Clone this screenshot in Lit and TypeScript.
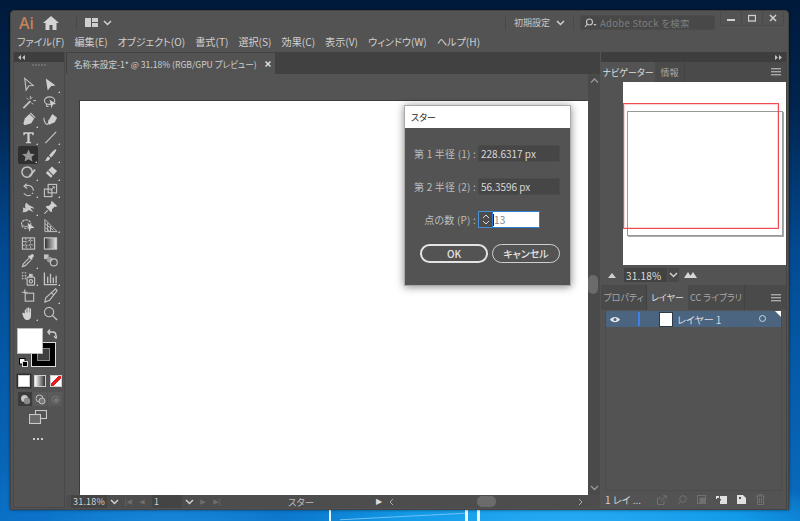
import { LitElement, html, css, svg } from "lit";
import { customElement } from "lit/decorators.js";

const S = (c: any, size = 16) => html`<svg class="ic" width=${size} height=${size} viewBox="0 0 16 16" fill="none" stroke="#c4c4c4" stroke-width="1.2">${c}</svg>`;

const tools: [any, boolean][] = [
  [svg`<path d="M4 1.5 13 9 8.5 9.3 5.5 14Z"/>`, false],
  [svg`<path d="M3 1.5 13.5 9 8.8 9.5 5 14.5Z" fill="#cfcfcf" stroke="none"/>`, true],
  [svg`<path d="M2.5 14 10 6.5" stroke-width="2"/><path d="M10 1v3M12 2.5l-2 2M13 6h3M6 3l2 2M11 8l2 2" stroke-width="1"/>`, false],
  [svg`<ellipse cx="7" cy="6" rx="5.5" ry="4"/><path d="M4 9c-1 2 0 4 2 3" /><path d="M7 5 14 9.5 10.5 10 9 14Z" fill="#cfcfcf" stroke="none"/>`, false],
  [svg`<path d="M9 2 14 7 11 12 4 14 2.5 12.5 4 7Z" fill="#cfcfcf" stroke="none"/><path d="M10 1 15 6" stroke-width="1.4"/>`, true],
  [svg`<path d="M1 6c0 4 2 8 4 7s0-4 2-5" /><path d="M10 2 15 6 12.5 11 6.5 13.5 5.5 12 7.5 6Z" fill="#cfcfcf" stroke="none"/>`, false],
  [svg`<path d="M2.5 2.5h11v3h-1.2l-.6-1.4H9.2V12.5l1.6.5v1H5.2v-1l1.6-.5V4.1H4.3l-.6 1.4H2.5Z" fill="#d0d0d0" stroke="none"/>`, true],
  [svg`<path d="M2.5 14 14 2" stroke-width="1.3"/>`, true],
  [svg`<path d="M8 1.5 10 6l4.8.5-3.6 3.2 1 4.8L8 12l-4.2 2.5 1-4.8L1.2 6.5 6 6Z" fill="#959595" stroke="none"/>`, true],
  [svg`<path d="M14 1.5c.8.6-2.5 6-5.5 8.5L6.5 8C9 5 13 .9 14 1.5Z" fill="#cfcfcf" stroke="none"/><path d="M5.5 9c-2 .5-1.500 3-3.500 5 3 0 5.500-.8 5.500-3.500Z" fill="#cfcfcf" stroke="none"/>`, true],
  [svg`<circle cx="6.500" cy="7.500" r="5.500" stroke-width="1.600"/><path d="M9 12 15 5" stroke-width="2"/>`, true],
  [svg`<path d="M9.500 1.500 15 6.500 8.500 13.500 3 8.500Z" fill="#d0d0d0" stroke="none"/><path d="M5.500 6 11 11.500" stroke="#535353"/>`, true],
  [svg`<path d="M4.500 3.500A5.500 5.500 0 1 1 3 11" stroke-dasharray="12 2 1.500 1.500"/><path d="M6 .8 3.200 3.500 6.500 5.800" />`, true],
  [svg`<rect x="1.500" y="6.500" width="8" height="8"/><rect x="5.500" y="1.500" width="9" height="9"/><path d="M8 8l4-4M10 4h2v2" stroke-width="1"/>`, true],
  [svg`<path d="M1.500 13c1-1 1-3 .5-5 1.500 0 2 1 3 1-1-2-1-5 1-6 1 1 2 3 4 3 1 1 3 1 4.500 3-2 0-3-.5-4-.5 0 2 2 3 3 4-2 0-4-1-5-2-1 2-4 3-7.500 2.500Z" fill="#c8c8c8" stroke="none"/>`, true],
  [svg`<path d="M9.500 1 15 6.500 13.800 7.500 12.500 7 9.500 10l.3 2-1.300 1L3 7.500l1-1.300 2 .3L9 3.500 8.500 2.200Z" fill="#d0d0d0" stroke="none"/><path d="M5 11 1.500 14.500"/>`, false],
  [svg`<ellipse cx="5.500" cy="6.500" rx="5" ry="4.500" stroke-dasharray="2.500 1"/><path d="M1 7c2 2 5 3 7 1" stroke-width="1"/><path d="M7 5 14.500 10.500 10.500 11 9 15Z" fill="#d0d0d0" stroke="none"/>`, false],
  [svg`<path d="M2 1.500v13h13ZM2 6l9 7M2 10l5 4M5 5v9M8 8.500V14" stroke-width="1"/>`, true],
  [svg`<rect x="1.500" y="2" width="13" height="12"/><path d="M2 6c3-1 4 1 5 0s3-2 7-1M2 10c3-1 4 1 6 0s3-1 6 0M5 2c1 3-1 4 0 6s0 4 1 6M10 2c-1 3 1 4 0 6s1 4 0 6" stroke-width="1" stroke-dasharray="2 1"/>`, false],
  [svg`<rect x="1.500" y="2" width="13" height="12" fill="url(#gr)" stroke="#c8c8c8"/>`, false],
  [svg`<path d="M13 1.500c1.500 1.500.5 3-1 3.500l.5 1.500-1.500 1L7.500 4l1-1.500 1.500.5c.5-1.500 2-2.500 3-1.500Z" fill="#d0d0d0" stroke="none"/><path d="M8.500 5.500 2.500 11.500l-1 3 3-1 6-6" />`, true],
  [svg`<rect x="1" y="1.500" width="5" height="5" fill="#c0c0c0" stroke="none"/><circle cx="7" cy="7" r="3" fill="#999" stroke="none"/><circle cx="11.500" cy="10" r="3.700"/>`, false],
  [svg`<rect x="6.500" y="6.500" width="8" height="8.500" rx="1"/><circle cx="10.500" cy="11" r="1.800"/><rect x="8.500" y="3" width="4" height="3.500" fill="#c0c0c0" stroke="none"/><path d="M1 2h1.500M4 2h1.500M1 5h1.500M4 5h1.500M1 8h1.500M4 8h1.500" stroke-width="1.500"/>`, true],
  [svg`<path d="M1.500 1.500V14.500H15M5 13V6M8 13V3M11 13V7M14 13V5" stroke-width="1.400"/>`, true],
  [svg`<rect x="4.500" y="5.500" width="9" height="8.500"/><path d="M1 4.500h6M4 1.500v4" />`, false],
  [svg`<path d="M13.500 1 15 3 7 13 2 15l1-4.500Z"/><path d="M9 5l2.500 2.500" />`, true],
  [svg`<path d="M4 8V4.500c0-1 1.300-1 1.300 0V7h.4V2.500c0-1 1.400-1 1.400 0V7h.4V2c0-1 1.400-1 1.400 0v5h.4V3.200c0-1 1.400-1 1.400 0V10c0 3-1.500 5-4 5-2 0-3-1-4-3L1.500 8.500c-.6-1 .7-1.800 1.400-1Z" fill="#d4d4d4" stroke="none"/>`, true],
  [svg`<circle cx="6.500" cy="6.500" r="5"/><path d="M10 10l5 5" stroke-width="1.500"/>`, false],
];

const chev = html`<svg class="ic" width="9" height="6" viewBox="0 0 9 6" fill="none" stroke="#d0d0d0" stroke-width="1.500"><path d="M1 1l3.500 3.500L8 1"/></svg>`;
const menuIc = html`<svg class="ic" width="10" height="8" viewBox="0 0 10 8" fill="#a8a8a8"><rect width="10" height="1.400"/><rect y="3" width="10" height="1.400"/><rect y="6" width="10" height="1.400"/></svg>`;
const corner = (left: boolean) => html`<svg class="ic" width="7" height="5" viewBox="0 0 7 5" fill="#c0c0c0"><path d=${left ? "M3 0v5L0 2.500ZM7 0v5L4 2.500Z" : "M0 0v5l3-2.500ZM4 0v5l3-2.500Z"}/></svg>`;

@customElement("app-root")
export class AppRoot extends LitElement {
  static styles = css`
    :host { display: block; width: 800px; height: 521px; overflow: hidden; position: relative;
      font-family: "Noto Sans CJK JP", "Liberation Sans", sans-serif; color: #d2d2d2;
      font-feature-settings: "palt";
      background:
        radial-gradient(300px 60px at 570px 530px, #2db0f5 0, #129ae8 60%, transparent 100%),
        radial-gradient(260px 90px at 170px 540px, #1e8fe0 0, #0a72c8 60%, transparent 100%),
        linear-gradient(180deg, #001a3c 0, #00244e 20%, #024a92 48%, #045aa8 70%, #0a6cc0 100%); }
    .ic { display: block; flex: none; }
    .beam { position: absolute; background: #eaf6ff; }
    .b1 { left: 329px; top: 510px; width: 2px; height: 11px; }
    .b2 { left: 465px; top: 510px; width: 3px; height: 11px; }
    .b3 { left: 477px; top: 510px; width: 3px; height: 11px; }
    .b4 { left: 340px; top: 516px; width: 125px; height: 1px; background: #6fc0f0; transform: rotate(-3deg); }
    .wrap { position: absolute; left: 10px; top: 10px; width: 779px; height: 500px; box-sizing: border-box;
      background: #535353; border: 1px solid #444; border-radius: 4px 4px 0 0; display: flex; flex-direction: column; box-shadow: 0 0 3px #0008; }

    .title { height: 23px; display: flex; align-items: center; flex: none; position: relative; }
    .ai { color: #c9835a; font: 500 16px "Noto Sans", sans-serif; margin-left: 8px; width: 24px; }
    .home { margin-left: 0; }
    .sep { width: 1px; height: 15px; background: #484848; flex: none; }
    .grow { flex: 1; }
    .layout { margin: 0 5px 0 8px; }
    .ws { font-size: 9px; margin-left: 8px; width: 36px; white-space: nowrap; color: #c8c8c8; }
    .search { width: 135px; height: 15px; margin-left: 6px; margin-right: 5px; background: #484848; border: 1px solid #4c4c4c; border-radius: 2px; display: flex; align-items: center; gap: 3px; padding-left: 3px; box-sizing: border-box; font-size: 9.500px; color: #7f7f7f; letter-spacing: .3px; white-space: nowrap; }
    .ctrls { display: flex; height: 14px; margin: 0 4px 0 0; border: 1px solid #4a4a4a; border-top: 0; border-radius: 0 0 2px 2px; align-self: flex-start; }
    .ctrl { width: 20px; display: flex; align-items: center; justify-content: center; border-right: 1px solid #4a4a4a; }
    .ctrl:last-child { border: 0; }

    .menu { height: 18px; flex: none; display: flex; align-items: center; padding: 0 0 3px 6px; box-sizing: border-box; gap: 10px; font-size: 10.150px; white-space: nowrap; color: #d0d0d0; }

    .main { flex: 1; display: flex; min-height: 0; padding: 0 1px 1px 2px; }

    .tb { width: 52px; flex: none; display: flex; flex-direction: column; border: 1px solid #484848; border-width: 0 1px 1px 1px; background: #535353; box-sizing: border-box; }
    .strip { height: 10px; background: #3e3e3e; flex: none; display: flex; align-items: center; padding: 0 4px; }
    .strip.r { justify-content: flex-end; padding-right: 4px; }
    .grip { width: 15px; height: 2px; margin: 2px auto 0; background: repeating-linear-gradient(90deg, #6e6e6e 0 2px, transparent 2px 3px); flex: none; }
    .tools { display: grid; grid-template-columns: 22px 22px; grid-auto-rows: 17.600px; justify-content: start; margin: 10px 0 0 3px; flex: none; }
    .tool { position: relative; display: flex; align-items: center; justify-content: center; border-radius: 2px; }
    .tool.on { background: #303030; margin: 0 1px 0 1px; }
    .tool.fly::after { content: ""; position: absolute; right: 1px; bottom: 1px; border: 1.500px solid transparent; border-right-color: #c8c8c8; border-bottom-color: #c8c8c8; }
    .colors { position: relative; height: 46px; margin-top: 6px; flex: none; }
    .fill { position: absolute; left: 3px; top: 0; width: 26px; height: 26px; background: #fff; border: 1px solid #bbb; box-sizing: border-box; z-index: 1; }
    .stroke { position: absolute; left: 17px; top: 14px; width: 25px; height: 25px; background: #000; border: 1px solid #ddd; box-sizing: border-box; display: flex; align-items: center; justify-content: center; }
    .stroke i { display: block; width: 11px; height: 11px; border: 1px solid #8a8a8a; background: #3f3f3f; }
    .swap { position: absolute; left: 33px; top: 1px; }
    .deflt { position: absolute; left: 5px; top: 30px; width: 9px; height: 9px; }
    .modes { display: flex; gap: 2px; margin: 0 0 0 3px; flex: none; height: 15px; }
    .mode { width: 12px; height: 12px; box-sizing: border-box; border: 1px solid #cfcfcf; margin: 1px; }
    .mode.w { background: #fff; box-shadow: 0 0 0 1.500px #303030; }
    .mode.g { background: linear-gradient(90deg, #fff, #333); }
    .mode.n { background: linear-gradient(135deg, #fff 38%, #e02020 38% 62%, #fff 62%); }
    .draw { display: flex; gap: 1px; margin: 3px 0 0 4px; flex: none; height: 14px; }
    .dm { width: 14px; height: 14px; display: flex; align-items: center; justify-content: center; background: #5a5a5a; }
    .dm.on { background: #3c3c3c; }
    .art { margin: 4px 0 0 15px; flex: none; }
    .dots { margin: 14px 0 0 19px; display: flex; gap: 2px; flex: none; }
    .dots i { width: 2px; height: 2px; background: #ccc; }

    .doc { width: 534px; flex: none; display: flex; flex-direction: column; margin-left: 1px; position: relative; }
    .tabs { height: 22px; background: #414141; flex: none; }
    .tab { width: 208px; height: 21px; background: #535353; margin-left: 1px; margin-top: 1px; display: flex; align-items: center; padding-left: 7px; box-sizing: border-box; font-size: 8.600px; white-space: nowrap; color: #cfcfcf; }
    .tab span { width: 191px; flex: none; }
    .canvasrow { flex: 1; display: flex; min-height: 0; }
    .canvas { flex: 1; background: #545454; padding: 27px 0 0 14px; box-sizing: border-box; display: flex; }
    .board { flex: 1; background: #fff; box-shadow: -1px -1px 0 #3c3c3c; }
    .vs { width: 12px; background: #4a4a4a; flex: none; display: flex; flex-direction: column; align-items: center; padding: 4px 0; box-sizing: border-box; }
    .thumb { width: 10px; height: 19px; border-radius: 5px; background: #6b6b6b; margin-top: 191px; margin-right: 2px; }
    .status { height: 13px; flex: none; background: #4d4d4d; display: flex; align-items: center; font-size: 9px; white-space: nowrap; }
    .field { background: #444; height: 13px; display: flex; align-items: center; padding-left: 2px; box-sizing: border-box; letter-spacing: .2px; flex: none; }
    .nav { display: flex; align-items: center; justify-content: center; width: 14px; height: 13px; flex: none; }
    .tri { color: #6e6e6e; font-size: 7px; width: 14px; text-align: center; font-family: "DejaVu Sans", sans-serif; flex: none; }
    .hthumb { width: 19px; height: 11px; background: #6b6b6b; border-radius: 5px; margin: 0 82px 0 83px; flex: none; }

    .panels { flex: 1; display: flex; flex-direction: column; margin-left: 1px; min-width: 0; border-right: 1px solid #444; }
    .ptabs { height: 20px; flex: none; background: #4a4a4a; display: flex; align-items: stretch; font-size: 9px; position: relative; }
    .pt { display: flex; align-items: center; justify-content: center; color: #a8a8a8; white-space: nowrap; box-sizing: border-box; background: #4a4a4a; border-right: 1px solid #424242; flex: none; }
    .pt.on { background: #535353; color: #dedede; border: 0; }
    .pm { margin-left: auto; display: flex; align-items: center; padding-right: 5px; }
    .navbody { height: 183px; flex: none; padding-left: 22px; display: flex; }
    .preview { flex: 1; background: #fff; position: relative; }
    .ra { position: absolute; left: 0; top: 21px; width: 156px; height: 126px; border: 1px solid #f04b50; box-shadow: inset 0 0 0 1px #f04b5040; box-sizing: border-box; }
    .rb { position: absolute; left: 4px; top: 29px; width: 156px; height: 125px; border: 1px solid #999; box-shadow: 1px 1px 0 #aaa; box-sizing: border-box; }
    .zoom { height: 20px; flex: none; display: flex; align-items: center; background: #535353; }
    .zf { width: 43px; height: 14px; background: #424242; font-size: 10px; padding-left: 2px; box-sizing: border-box; display: flex; align-items: center; color: #dcdcdc; letter-spacing: .2px; }
    .zc { width: 11px; height: 14px; background: #484848; margin-left: 1px; display: flex; align-items: center; justify-content: center; }
    .layers { flex: 1; display: flex; flex-direction: column; min-height: 0; }
    .lbody { flex: 1; margin: 1px 4px 0; background: #535353; border: 1px solid #4c4c4c; border-top: 0; }
    .lrow { height: 16px; background: #4b6480; display: flex; align-items: center; position: relative; font-size: 10px; color: #dcdcdc; white-space: nowrap; }
    .bar { width: 2px; height: 14px; background: #3f7fe8; margin-left: 1px; }
    .thumbL { width: 12px; height: 13px; background: #fff; border: 1px solid #2c3a4a; margin: 0 4px 0 19px; box-sizing: content-box; }
    .lc { width: 5px; height: 5px; border: 1px solid #cfd6de; border-radius: 50%; position: absolute; right: 15px; top: 4px; }
    .cut { position: absolute; right: 0; top: 0; border: 3px solid transparent; border-right-color: #fff; border-top-color: #fff; }
    .lfoot { height: 17px; flex: none; display: flex; align-items: center; font-size: 10px; padding-left: 4px; white-space: nowrap; }
    .lfoot > span { width: 41px; flex: none; }
    .lic { display: flex; margin-left: 11px; align-items: center; }
    .lic > * { margin-right: 10px; }

    .dlg { position: absolute; left: 338px; top: 53px; width: 167px; height: 181px; background: #535353; border: 1px solid #aaa; box-sizing: border-box; box-shadow: 0 1px 8px #0007; display: flex; flex-direction: column; }
    .dt { height: 22px; background: #fff; color: #222; font-size: 9px; display: flex; align-items: center; padding-left: 6px; flex: none; }
    .df { padding: 17px 10px 0 0; display: flex; flex-direction: column; gap: 16px; }
    .dr { display: flex; justify-content: flex-end; align-items: center; height: 17px; font-size: 10px; color: #bdbdbd; letter-spacing: .2px; white-space: nowrap; gap: 2px; }
    .input { width: 82px; height: 17px; background: #464646; border: 1px solid #4c4c4c; box-sizing: border-box; color: #d8d8d8; font-size: 10px; padding-left: 2px; display: flex; align-items: center; letter-spacing: 0; }
    .pts { display: flex; height: 17px; margin-right: 20px; }
    .spin { width: 14px; box-sizing: border-box; border: 1px solid #4a90d8; border-right: 0; display: flex; flex-direction: column; align-items: center; justify-content: center; gap: 1px; background: #4c4c4c; }
    .num { width: 48px; background: #fff; border: 1px solid #2a7fd5; box-sizing: border-box; color: #888; font-size: 10px; display: flex; align-items: center; padding-left: 0; }
    .num i { width: 1px; height: 12px; background: #222; }
    .btns { display: flex; gap: 4px; justify-content: flex-end; }
    .btn { height: 19px; width: 68px; border: 2px solid #e4e4e4; border-radius: 10px; box-sizing: border-box; display: flex; align-items: center; justify-content: center; font-size: 10px; font-weight: 500; color: #e4e4e4; }
    .btn.c { border-width: 1.500px; border-color: #cfcfcf; }
  `;

  render() {
    return html`
      <div class="beam b1"></div><div class="beam b2"></div><div class="beam b3"></div><div class="beam b4"></div>
      <div class="wrap">
        <div class="title">
          <div class="ai">Ai</div>
          <svg class="ic home" width="16" height="14" viewBox="0 0 16 14" fill="#d4d4d4"><path d="M8 0 16 7h-2.500v7H9.500V9h-3v5H2.500V7H0Z"/></svg>
          <div class="sep" style="margin-left:17px"></div>
          <svg class="ic layout" width="13" height="9" viewBox="0 0 13 9" fill="#cfcfcf"><rect width="6" height="9"/><rect x="7" width="6" height="4"/><rect x="7" y="5" width="6" height="4"/></svg>
          ${chev}
          <div class="grow"></div>
          <div class="sep"></div>
          <div class="ws">初期設定</div>
          <div style="margin-left:6px">${chev}</div>
          <div class="sep" style="margin-left:8px"></div>
          <div class="search">
            <svg class="ic" width="13" height="10" viewBox="0 0 13 10" fill="none" stroke="#c8c8c8" stroke-width="1.100"><circle cx="5.500" cy="4" r="3"/><path d="M3.300 6.200 1 9"/><path d="M9.500 6h3L11 8Z" fill="#c8c8c8" stroke="none"/></svg>
            Adobe Stock を検索
          </div>
          <div class="ctrls">
            <div class="ctrl"><svg class="ic" width="8" height="8" viewBox="0 0 8 8" fill="#d0d0d0"><rect y="5" width="8" height="2"/></svg></div>
            <div class="ctrl"><svg class="ic" width="8" height="8" viewBox="0 0 8 8" fill="none" stroke="#d0d0d0"><rect x=".5" y="1.500" width="7" height="5.500" stroke-width="1.300"/></svg></div>
            <div class="ctrl"><svg class="ic" width="8" height="8" viewBox="0 0 8 8" fill="none" stroke="#d0d0d0" stroke-width="1.500"><path d="M1 1l6 6M7 1 1 7"/></svg></div>
          </div>
        </div>
        <div class="menu">
          <span>ファイル(F)</span><span>編集(E)</span><span>オブジェクト(O)</span><span>書式(T)</span><span>選択(S)</span><span>効果(C)</span><span>表示(V)</span><span>ウィンドウ(W)</span><span>ヘルプ(H)</span>
        </div>
        <div class="main">
          <div class="tb">
            <div class="strip">${corner(true)}</div>
            <div class="grip"></div>
            <svg width="0" height="0" style="position:absolute"><defs><linearGradient id="gr"><stop offset="0" stop-color="#2a2a2a"/><stop offset="1" stop-color="#e8e8e8"/></linearGradient></defs></svg>
            <div class="tools">
              ${tools.map(([c, fly], i) => html`<div class="tool ${fly ? "fly" : ""} ${i === 8 ? "on" : ""}">${S(c, 15)}</div>`)}
            </div>
            <div class="colors">
              <div class="fill"></div>
              <div class="stroke"><i></i></div>
              <svg class="ic swap" width="10" height="10" viewBox="0 0 10 10" fill="none" stroke="#d0d0d0" stroke-width="1.300"><path d="M1 3h5c2 0 3 1 3 4"/><path d="M3 .5 .8 3 3 5.500M7 7l2 2.200L9.800 7" /></svg>
              <svg class="ic deflt" viewBox="0 0 9 9"><rect x=".5" y=".5" width="5.500" height="5.500" fill="#fff" stroke="#000"/><rect x="3.500" y="3.500" width="5" height="5" fill="#000" stroke="#ddd"/></svg>
            </div>
            <div class="modes"><div class="mode w"></div><div class="mode g"></div><div class="mode n"></div></div>
            <div class="draw">
              <div class="dm on"><svg class="ic" width="11" height="11" viewBox="0 0 11 11"><circle cx="4.500" cy="4.500" r="3.500" fill="#c8c8c8"/><circle cx="7" cy="7" r="3.200" fill="#8a8a8a"/></svg></div>
              <div class="dm"><svg class="ic" width="11" height="11" viewBox="0 0 11 11" fill="none" stroke="#c0c0c0"><circle cx="4.500" cy="4.500" r="3.500"/><circle cx="7" cy="7" r="3" fill="#777"/></svg></div>
              <div class="dm"><svg class="ic" width="9" height="9" viewBox="0 0 9 9" fill="none" stroke="#777"><circle cx="4.500" cy="4.500" r="3.500"/><circle cx="5" cy="5" r="1.500" fill="#777"/></svg></div>
            </div>
            <svg class="ic art" width="18" height="14" viewBox="0 0 18 14" fill="none" stroke="#c8c8c8" stroke-width="1.100"><rect x="6.500" y=".5" width="11" height="8"/><rect x=".5" y="4.500" width="11" height="9" fill="#6a6a6a"/></svg>
            <div class="dots"><i></i><i></i><i></i></div>
          </div>

          <div class="doc">
            <div class="tabs">
              <div class="tab">
                <span>名称未設定-1* @ 31.18% (RGB/GPU プレビュー)</span>
                <svg class="ic" width="6" height="6" viewBox="0 0 6 6" stroke="#e0e0e0" stroke-width="1.500"><path d="M.5.5l5 5M5.500.5l-5 5"/></svg>
              </div>
            </div>
            <div class="canvasrow">
              <div class="canvas"><div class="board"></div></div>
              <div class="vs">
                <svg class="ic" width="9" height="6" viewBox="0 0 9 6" fill="none" stroke="#999" stroke-width="1.300"><path d="M1 4.500 4.500 1 8 4.500"/></svg>
                <div class="thumb"></div>
                <div class="grow"></div>
                <svg class="ic" width="9" height="6" viewBox="0 0 9 6" fill="none" stroke="#999" stroke-width="1.300"><path d="M1 1l3.500 3.500L8 1"/></svg>
              </div>
            </div>
            <div class="status">
              <div class="field" style="width:36px;margin-left:5px;">31.18%</div>
              <div class="nav">${chev}</div>
              <span class="tri">|◀</span><span class="tri">◀</span>
              <div class="field" style="width:30px;margin-left:3px;">1</div>
              <div class="nav">${chev}</div>
              <span class="tri">▶</span><span class="tri">▶|</span>
              <span style="margin-left:64px;width:22px;flex:none;color:#bdbdbd;font-size:9.500px;">スター</span>
              <span class="tri" style="margin-left:62px;color:#ddd;font-size:8px;">▶</span>
              <svg class="ic" width="5" height="8" viewBox="0 0 5 8" fill="none" stroke="#aaa" style="margin-left:3px"><path d="M4 1 1 4l3 3"/></svg>
              <div class="hthumb"></div>
              <svg class="ic" width="5" height="8" viewBox="0 0 5 8" fill="none" stroke="#aaa"><path d="M1 1l3 3-3 3"/></svg>
            </div>
            <div class="dlg">
              <div class="dt">スター</div>
              <div class="df">
                <div class="dr"><span>第 1 半径 (1) :</span><div class="input">228.6317 px</div></div>
                <div class="dr"><span>第 2 半径 (2) :</span><div class="input">56.3596 px</div></div>
                <div class="dr"><span>点の数 (P) :</span>
                  <div class="pts">
                    <div class="spin">
                      <svg class="ic" width="8" height="5" viewBox="0 0 8 5" fill="none" stroke="#ddd"><path d="M1 4l3-3 3 3"/></svg>
                      <svg class="ic" width="8" height="5" viewBox="0 0 8 5" fill="none" stroke="#ddd"><path d="M1 1l3 3 3-3"/></svg>
                    </div>
                    <div class="num"><i></i>13</div>
                  </div>
                </div>
                <div class="btns"><div class="btn">OK</div><div class="btn c">キャンセル</div></div>
              </div>
            </div>
          </div>

          <div class="panels">
            <div class="strip r">${corner(false)}</div>
            <div class="ptabs">
              <div class="pt on" style="width:54px">ナビゲーター</div>
              <div class="pt" style="width:30px">情報</div>
              <div class="pm">${menuIc}</div>
            </div>
            <div class="navbody"><div class="preview"><div class="rb"></div><div class="ra"></div></div></div>
            <div class="zoom">
              <svg class="ic" width="8" height="5" viewBox="0 0 8 5" fill="#d0d0d0" style="margin-left:7px"><path d="M4 0 8 5H0Z"/></svg>
              <div class="zf" style="margin-left:8px">31.18%</div>
              <div class="zc">${chev}</div>
              <svg class="ic" width="13" height="6" viewBox="0 0 13 6" fill="#d8d8d8" style="margin-left:5px"><path d="M4 0 8 6H0ZM9 0l4 6H5Z"/></svg>
            </div>
            <div class="layers">
              <div class="ptabs" style="height:25px">
                <div class="pt" style="width:46px">プロパティ</div>
                <div class="pt on" style="width:41px">レイヤー</div>
                <div class="pt" style="width:57px">CC ライブラリ</div>
                <div class="pm">${menuIc}</div>
              </div>
              <div class="lbody">
                <div class="lrow">
                  <svg class="ic" width="10" height="7" viewBox="0 0 10 7" style="margin-left:4px"><path d="M0 3.500C2 0 8 0 10 3.500 8 7 2 7 0 3.500Z" fill="#dfe5ea"/><circle cx="5" cy="3.500" r="1.500" fill="#4b6480"/></svg>
                  <div class="bar" style="margin-left:18px"></div>
                  <div class="thumbL"></div>
                  <span>レイヤー 1</span>
                  <div class="lc"></div><div class="cut"></div>
                </div>
              </div>
              <div class="lfoot">
                <span>1 レイ ...</span>
                <div class="lic">
                  <svg class="ic" width="10" height="10" viewBox="0 0 10 10" fill="none" stroke="#707070"><path d="M7 5.500V9.500H.5V3H4.500M4 6l5-5M6 .8h3.300V4"/></svg>
                  <svg class="ic" width="10" height="10" viewBox="0 0 10 10" fill="none" stroke="#707070"><circle cx="6" cy="4" r="3.300"/><path d="M3.500 6.500 .5 9.500"/></svg>
                  <svg class="ic" width="9" height="9" viewBox="0 0 9 9" fill="none" stroke="#707070"><rect x=".5" y=".5" width="8" height="8"/><rect x="3" y="3" width="5" height="5" fill="#707070"/></svg>
                  <svg class="ic" width="11" height="9" viewBox="0 0 11 9" fill="#e0e0e0"><rect x="4" y="1" width="7" height="8"/><path d="M0 1h3v2H1v1H0Z"/><rect x="2" y="4" width="3" height="1.500" fill="#535353"/></svg>
                  <svg class="ic" width="9" height="9" viewBox="0 0 9 9" fill="#e0e0e0"><path d="M0 0h6l3 3v6H0Z"/><rect x="2" y="2" width="2" height="2" fill="#535353"/></svg>
                  <svg class="ic" width="9" height="11" viewBox="0 0 9 11" fill="none" stroke="#707070"><path d="M0 2h9M3 2V.5h3V2M1.500 2v8.500h6V2M3.500 4v5M5.500 4v5"/></svg>
                </div>
              </div>
            </div>
          </div>
        </div>
      </div>
    `;
  }
}
